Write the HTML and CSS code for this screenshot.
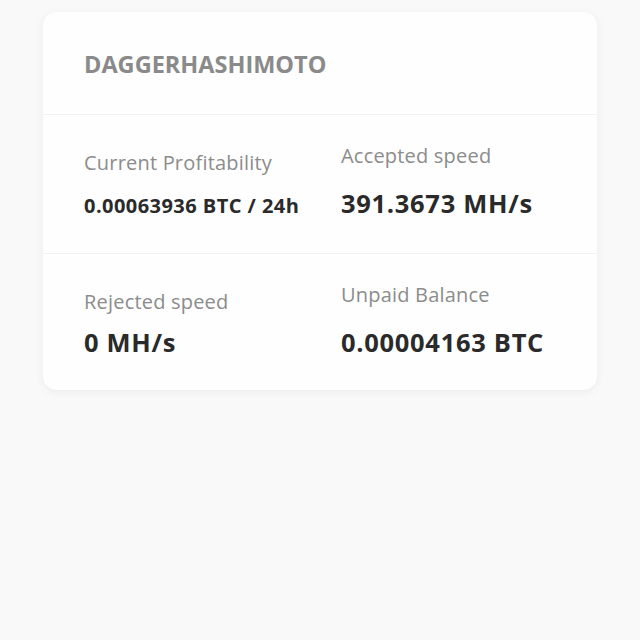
FILE: index.html
```html
<!DOCTYPE html>
<html lang="en">
<head>
<meta charset="UTF-8">
<meta name="viewport" content="width=device-width, initial-scale=1.0">
<title>Worker</title>
<link rel="stylesheet" href="styles.css">
</head>
<body>
<div class="card">
    <div class="card-header">DAGGERHASHIMOTO</div>
    <div class="stats-row">
        <div class="stat stat-left">
            <div class="stat-label">Current Profitability</div>
            <div class="stat-value small">0.00063936 BTC / 24h</div>
        </div>
        <div class="stat stat-right">
            <div class="stat-label">Accepted speed</div>
            <div class="stat-value">391.3673 MH/s</div>
        </div>
    </div>
    <div class="stats-row">
        <div class="stat stat-left">
            <div class="stat-label">Rejected speed</div>
            <div class="stat-value">0 MH/s</div>
        </div>
        <div class="stat stat-right">
            <div class="stat-label">Unpaid Balance</div>
            <div class="stat-value">0.00004163 BTC</div>
        </div>
    </div>
</div>
</body>
</html>
```

FILE: styles.css
```css
body, html {
    margin: 0;
    font-family: "Open Sans", "Noto Sans", sans-serif;
    background-color: #f9f9f9;
    height: 100%;
}

body {
    padding: 12px 43px 0 43px;
    box-sizing: border-box;
}

.card {
    background: #fefefe;
    border-radius: 14px;
    box-shadow: 0 2px 10px rgba(0,0,0,0.06);
    overflow: hidden;
}

.card-header {
    height: 103px;
    padding: 2px 41px 0 41px;
    display: flex;
    align-items: center;
    font-size: 23.5px;
    font-weight: 700;
    color: #8a8a8a;
    border-bottom: 1px solid #f0f0f0;
    box-sizing: border-box;
}

.stats-row {
    display: flex;
    height: 138px;
    box-sizing: border-box;
}

.stats-row + .stats-row {
    border-top: 1px solid #f0f0f0;
    height: 137px;
}

.stat-left {
    width: 257px;
    padding-left: 41px;
    padding-top: 34px;
}

.stat-right {
    flex: 1;
    padding-top: 27px;
}

.stat-label {
    font-size: 20px;
    letter-spacing: 0.2px;
    line-height: 28px;
    color: #8c8c8c;
}

.stat-value {
    font-size: 25.5px;
    letter-spacing: 0.7px;
    font-weight: 700;
    line-height: 34px;
    color: #2a2a2a;
    margin-top: 16px;
}

.stat-left .stat-value {
    margin-top: 9px;
}

.stat-value.small {
    font-size: 20px;
    letter-spacing: 0.45px;
    margin-top: 12px;
}
```
